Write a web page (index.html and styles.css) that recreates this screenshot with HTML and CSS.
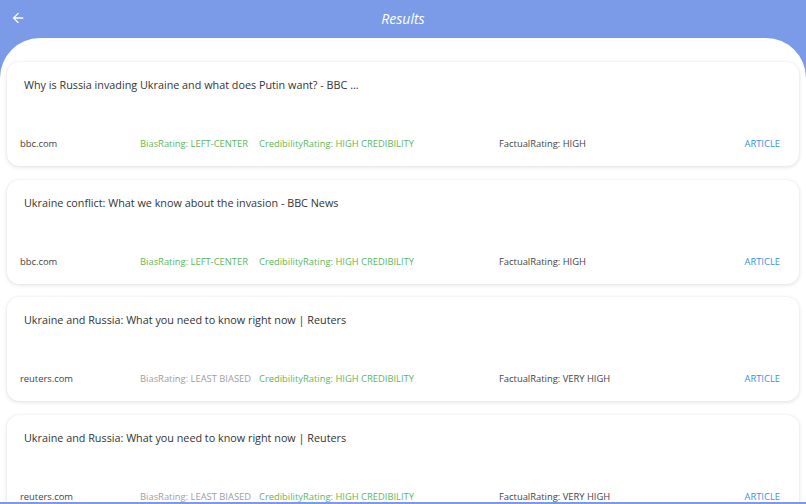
FILE: index.html
```html
<!DOCTYPE html>
<html>
<head>
<meta charset="utf-8">
<link rel="stylesheet" href="styles.css">
</head>
<body>
<header class="topbar">
  <span class="back">
    <svg width="16" height="16" viewBox="0 0 24 24"><path d="M20 11H7.83l5.59-5.59L12 4l-8 8 8 8 1.41-1.41L7.83 13H20v-2z" fill="#fff"/></svg>
  </span>
  <h1 class="title">Results</h1>
</header>
<main class="sheet">
  <div class="card">
    <div class="card-title">Why is Russia invading Ukraine and what does Putin want? - BBC ...</div>
    <div class="meta">
      <span class="domain">bbc.com</span>
      <span class="bias green">BiasRating: LEFT-CENTER</span>
      <span class="cred green">CredibilityRating: HIGH CREDIBILITY</span>
      <span class="fact">FactualRating: HIGH</span>
      <span class="link">ARTICLE</span>
    </div>
  </div>
  <div class="card">
    <div class="card-title">Ukraine conflict: What we know about the invasion - BBC News</div>
    <div class="meta">
      <span class="domain">bbc.com</span>
      <span class="bias green">BiasRating: LEFT-CENTER</span>
      <span class="cred green">CredibilityRating: HIGH CREDIBILITY</span>
      <span class="fact">FactualRating: HIGH</span>
      <span class="link">ARTICLE</span>
    </div>
  </div>
  <div class="card">
    <div class="card-title">Ukraine and Russia: What you need to know right now | Reuters</div>
    <div class="meta">
      <span class="domain">reuters.com</span>
      <span class="bias gray">BiasRating: LEAST BIASED</span>
      <span class="cred green">CredibilityRating: HIGH CREDIBILITY</span>
      <span class="fact">FactualRating: VERY HIGH</span>
      <span class="link">ARTICLE</span>
    </div>
  </div>
  <div class="card">
    <div class="card-title">Ukraine and Russia: What you need to know right now | Reuters</div>
    <div class="meta">
      <span class="domain">reuters.com</span>
      <span class="bias gray">BiasRating: LEAST BIASED</span>
      <span class="cred green">CredibilityRating: HIGH CREDIBILITY</span>
      <span class="fact">FactualRating: VERY HIGH</span>
      <span class="link">ARTICLE</span>
    </div>
  </div>
</main>
</body>
</html>
```
FILE: styles.css
```css
html, body {
  margin: 0;
  padding: 0;
}
body {
  width: 806px;
  height: 504px;
  overflow: hidden;
  background: #7b9be8;
  font-family: "Open Sans", sans-serif;
  color: #333;
}
.topbar {
  height: 38px;
  display: flex;
  align-items: center;
  justify-content: center;
  position: relative;
}
.back {
  position: absolute;
  left: 10px;
  top: 10px;
  width: 16px;
  height: 16px;
  display: flex;
}
.title {
  margin: 0 0 2px;
  font-size: 14px;
  font-style: italic;
  font-weight: 400;
  color: #fff;
}
.sheet {
  height: 464px;
  background: #fff;
  border-radius: 40px 40px 0 0;
  padding: 24px 7px 0;
  box-sizing: border-box;
  overflow: hidden;
  display: flex;
  flex-direction: column;
  gap: 13.7px;
}
.card {
  flex: none;
  height: 104px;
  box-sizing: border-box;
  border-radius: 12px;
  background: #fff;
  box-shadow: 0 1px 4px rgba(0,0,0,0.13), 0 0 1px rgba(0,0,0,0.08);
  display: flex;
  flex-direction: column;
  justify-content: space-between;
  padding: 15px 19px 15px 13px;
}
.card-title {
  padding-left: 4px;
  font-size: 10.8px;
  line-height: 16px;
  color: #333;
}
.meta {
  display: flex;
  align-items: center;
  font-size: 9.4px;
  line-height: 14px;
  white-space: nowrap;
}
.domain { width: 120px; color: #444; }
.bias { width: 119px; }
.cred { width: 240px; }
.fact { flex: 1; color: #444; }
.link { color: #3593dc; }
.green { color: #5cb85c; }
.gray { color: #9e9e9e; }
```
